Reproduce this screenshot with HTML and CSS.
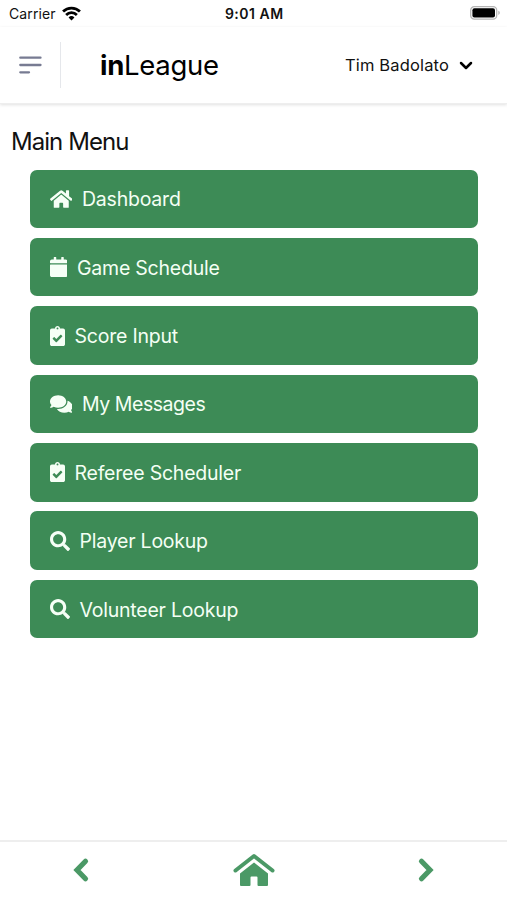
FILE: index.html
```html
<!DOCTYPE html>
<html lang="en">
<head>
    <meta charset="UTF-8">
    <meta name="viewport" content="width=device-width, initial-scale=1.0">
    <title>inLeague</title>
    <link rel="stylesheet" href="styles.css">
</head>
<body>
    <svg class="sprite">
        <symbol id="home" viewBox="0 0 576 512"><path d="M280.37 148.26L96 300.11V464a16 16 0 0 0 16 16l112.06-.29a16 16 0 0 0 15.92-16V368a16 16 0 0 1 16-16h64a16 16 0 0 1 16 16v95.64a16 16 0 0 0 16 16.05L464 480a16 16 0 0 0 16-16V300L295.67 148.26a12.19 12.19 0 0 0-15.3 0zM571.6 251.47L488 182.56V44.05a12 12 0 0 0-12-12h-56a12 12 0 0 0-12 12v72.61L318.47 43a48 48 0 0 0-61 0L4.34 251.47a12 12 0 0 0-1.6 16.9l25.5 31A12 12 0 0 0 45.15 301l235.22-193.74a12.19 12.19 0 0 1 15.3 0L530.9 301a12 12 0 0 0 16.9-1.6l25.5-31a12 12 0 0 0-1.7-16.93z"/></symbol>
        <symbol id="calendar" viewBox="0 0 448 512"><path d="M12 192h424c6.6 0 12 5.4 12 12v260c0 26.5-21.5 48-48 48H48c-26.5 0-48-21.5-48-48V204c0-6.6 5.4-12 12-12zm436-44v-36c0-26.5-21.5-48-48-48h-48V12c0-6.6-5.4-12-12-12h-40c-6.6 0-12 5.4-12 12v52H160V12c0-6.6-5.4-12-12-12h-40c-6.6 0-12 5.4-12 12v52H48C21.5 64 0 85.5 0 112v36c0 6.6 5.4 12 12 12h424c6.6 0 12-5.4 12-12z"/></symbol>
        <symbol id="clipboard" viewBox="0 0 384 512"><path d="M336 64h-80c0-35.3-28.7-64-64-64s-64 28.7-64 64H48C21.5 64 0 85.5 0 112v352c0 26.5 21.5 48 48 48h288c26.5 0 48-21.5 48-48V112c0-26.5-21.5-48-48-48zM192 40c13.3 0 24 10.7 24 24s-10.7 24-24 24-24-10.7-24-24 10.7-24 24-24zm121.2 231.8l-143 141.8c-4.7 4.7-12.3 4.6-17-.1l-82.6-83.3c-4.7-4.7-4.6-12.3.1-17L99.1 285c4.7-4.7 12.3-4.6 17 .1l46 46.4 106-105.2c4.7-4.7 12.3-4.6 17 .1l28.2 28.4c4.7 4.8 4.6 12.3-.1 17z"/></symbol>
        <symbol id="comments" viewBox="0 0 576 512"><path d="M416 192c0-88.4-93.1-160-208-160S0 103.6 0 192c0 34.3 14.1 65.9 38 92-13.4 30.2-35.5 54.2-35.8 54.5-2.2 2.3-2.8 5.7-1.5 8.7S4.8 352 8 352c36.6 0 66.9-12.3 88.7-25 32.2 15.7 70.3 25 111.3 25 114.9 0 208-71.6 208-160zm122 220c23.9-26 38-57.7 38-92 0-66.9-53.5-124.2-129.3-148.1.9 6.6 1.3 13.3 1.3 20.1 0 105.9-107.7 192-240 192-10.8 0-21.3-.8-31.7-1.9C207.8 439.6 281.8 480 368 480c41 0 79.1-9.2 111.3-25 21.8 12.7 52.1 25 88.7 25 3.2 0 6.1-1.9 7.3-4.8 1.3-2.9.7-6.3-1.5-8.7-.3-.3-22.4-24.2-35.8-54.5z"/></symbol>
        <symbol id="search" viewBox="0 0 512 512"><path d="M505 442.7L405.3 343c-4.5-4.5-10.6-7-17-7H372c27.6-35.3 44-79.7 44-128C416 93.1 322.9 0 208 0S0 93.1 0 208s93.1 208 208 208c48.3 0 92.7-16.4 128-44v16.3c0 6.4 2.5 12.5 7 17l99.7 99.7c9.4 9.4 24.6 9.4 33.9 0l28.3-28.3c9.4-9.4 9.4-24.6.1-34zM208 336c-70.7 0-128-57.2-128-128 0-70.7 57.2-128 128-128 70.7 0 128 57.2 128 128 0 70.7-57.2 128-128 128z"/></symbol>
    </svg>

    <div class="status">
        <div class="carrier">
            <span>Carrier</span>
            <svg width="19" height="15" viewBox="0 0 18 14" fill="none" stroke="#000" stroke-width="2.6">
                <path d="M1 5.2a11.4 11.4 0 0 1 16 0M3.9 8.4a7.2 7.2 0 0 1 10.2 0"/>
                <path d="M6.2 10.8a4 4 0 0 1 5.6 0L9 13.6z" fill="#000" stroke="none"/>
            </svg>
        </div>
        <div class="time">9:01 AM</div>
        <svg class="battery" width="31" height="14" viewBox="0 0 31 14">
            <rect x=".7" y=".7" width="26" height="12.4" rx="3.6" fill="#fff" stroke="#b5b5b5" stroke-width="1.3"/>
            <rect x="2.4" y="2.2" width="22.6" height="9.400" rx="2" fill="#000"/>
            <path d="M28.3 4.8c2 .7 2 3.5 0 4.2z" fill="#b5b5b5"/>
        </svg>
    </div>

    <header class="header">
        <button class="toggle">
            <svg width="24" height="20" viewBox="0 0 24 20" stroke="#777b92" stroke-width="2.3" stroke-linecap="round">
                <path d="M2.300 2.700h20.200M2.300 10h20.200M2.300 17.300h8.700"/>
            </svg>
        </button>
        <div class="logo"><b>in</b>League</div>
        <div class="user">
            <span>Tim Badolato</span>
            <svg width="14" height="10" viewBox="0 0 14 10" fill="none" stroke="#000" stroke-width="2.5" stroke-linecap="round" stroke-linejoin="round">
                <path d="M2 3l5 5 5-5"/>
            </svg>
        </div>
    </header>

    <main class="main">
        <h1>Main Menu</h1>
        <nav class="menu">
            <a class="item"><svg class="wide"><use href="#home"/></svg><span>Dashboard</span></a>
            <a class="item"><svg class="calendar"><use href="#calendar"/></svg><span>Game Schedule</span></a>
            <a class="item"><svg class="clipboard"><use href="#clipboard"/></svg><span>Score Input</span></a>
            <a class="item"><svg class="wide"><use href="#comments"/></svg><span class="messages">My Messages</span></a>
            <a class="item"><svg class="clipboard"><use href="#clipboard"/></svg><span>Referee Scheduler</span></a>
            <a class="item"><svg class="search"><use href="#search"/></svg><span>Player Lookup</span></a>
            <a class="item"><svg class="search"><use href="#search"/></svg><span>Volunteer Lookup</span></a>
        </nav>
    </main>

    <footer class="footer">
        <svg width="18" height="26" viewBox="0 0 18 26" fill="none" stroke="#4b9966" stroke-width="5.2" stroke-linecap="round">
            <path d="M13.500 4.300L5 13l8.500 8.700"/>
        </svg>
        <svg width="42" height="34" viewBox="0 0 42 34">
            <path d="M2.5 17.5L21 3l18.500 14.500" fill="none" stroke="#4b9966" stroke-width="4" stroke-linecap="round" stroke-linejoin="round"/>
            <path d="M21 9.500L35 20.500V32q0 1-1 1h-8.500q-1 0-1-1v-7.500q0-1-1-1h-5q-1 0-1 1V32q0 1-1 1H8q-1 0-1-1V20.500z" fill="#4b9966"/>
        </svg>
        <svg width="18" height="26" viewBox="0 0 18 26" fill="none" stroke="#4b9966" stroke-width="5.2" stroke-linecap="round">
            <path d="M4.500 4.300L13 13l-8.500 8.700"/>
        </svg>
    </footer>
</body>
</html>
```
FILE: styles.css
```css
* { box-sizing: border-box; }
body { margin: 0; height: 900px; display: flex; flex-direction: column; background: #fff;
       color: #111; font-family: Inter, "Liberation Sans", sans-serif; overflow: hidden; }
svg { display: block; flex: none; }
.sprite { width: 0; height: 0; position: absolute; }

.status { height: 27px; flex: none; display: grid; grid-template-columns: 1fr auto 1fr; align-items: center;
          padding: 0 6px 0 9px; font-size: 14px; }
.carrier { display: flex; align-items: center; gap: 6px; letter-spacing: 0.1px; }
.time { font-weight: 600; letter-spacing: 0.5px; margin-left: -1.5px; }
.battery { justify-self: end; margin-top: -1px; }

.header { height: 77px; flex: none; display: flex; align-items: center; padding: 0 34px 0 0;
          border-bottom: 1px solid #eee; box-shadow: 0 1px 3px rgba(0, 0, 0, 0.12); }
.toggle { width: 61px; height: 46px; padding: 0 0 0 18px; border: 0; border-right: 1px solid #e5e7eb; background: none; }
.logo { margin-left: 39px; font-size: 27.5px; letter-spacing: -0.3px; color: #000; }
.logo b { font-weight: 700; }
.user { margin-left: auto; display: flex; align-items: center; gap: 10px; font-size: 16.5px; letter-spacing: 0.15px; }

.main { flex: 1; padding: 21px 29.5px 0 30px; }
h1 { margin: 0 0 11.5px -19px; font-size: 24px; line-height: 33px; font-weight: 400; letter-spacing: -0.95px; }
.menu { display: flex; flex-direction: column; gap: 9.9px; }
.item { height: 58.5px; display: flex; align-items: center; gap: 10px; padding: 1px 0 0 19.5px;
        border-radius: 7px; background: #3d8b56; color: #f4fff4; font-size: 19.5px; letter-spacing: -0.22px; }
.item svg { height: 20px; margin-top: -1px; fill: #f6fff6; }
.item .wide { width: 22.5px; }
.item .calendar { width: 17.5px; }
.item .clipboard { width: 15px; }
.item .search { width: 20px; }
.item .messages { letter-spacing: -0.45px; }

.footer { height: 60px; flex: none; display: flex; align-items: center; justify-content: space-between;
          padding: 0 72px 3px; border-top: 2px solid #eee; }
```
